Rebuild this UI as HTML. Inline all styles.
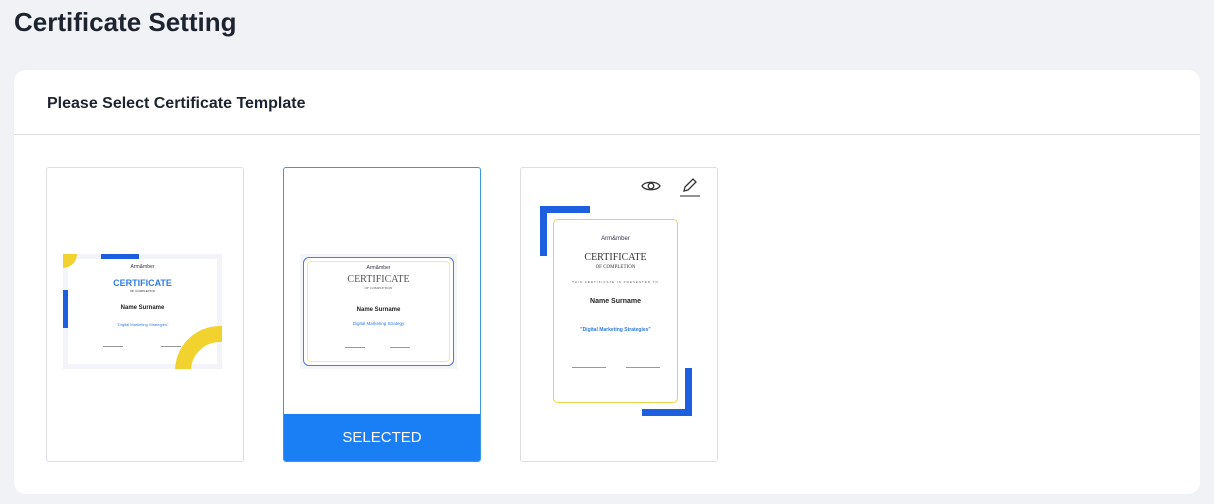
<!DOCTYPE html>
<html><head><style>
*{margin:0;padding:0;box-sizing:border-box}
body{width:1214px;height:504px;background:#f1f2f6;font-family:"Liberation Sans",sans-serif;position:relative;overflow:hidden}
h1{position:absolute;left:14px;top:7px;font-size:26px;font-weight:700;color:#1e2330}
.panel{position:absolute;left:14px;top:70px;width:1186px;height:424px;background:#fff;border-radius:12px}
.ph{position:absolute;left:33px;top:25px;font-size:16px;font-weight:700;color:#1e2330}
.line{position:absolute;left:0;top:64px;width:1186px;height:1px;background:#dcdee3}
.card{position:absolute;top:167px;width:198px;height:295px;border:1px solid #dcdee3;border-radius:3px;background:#fff;overflow:hidden}
.t{position:absolute;text-align:center;width:100%;left:0}
.sg{position:absolute;height:1px;background:#999;width:20px}
</style></head><body>
<h1>Certificate Setting</h1>
<div class="panel"><div class="ph">Please Select Certificate Template</div><div class="line"></div></div>

<div class="card" style="left:46px">
 <div style="position:absolute;left:16px;top:86px;width:159px;height:115px;background:#f3f4fa;overflow:hidden">
  <div style="position:absolute;left:5px;top:5px;width:149px;height:105px;background:#fff"></div>
  <div style="position:absolute;left:-14px;top:-14px;width:28px;height:28px;background:#f2d22e;border-radius:50%"></div>
  <div style="position:absolute;left:38px;top:0;width:38px;height:5px;background:#1e5fe0"></div>
  <div style="position:absolute;left:0;top:36px;width:5px;height:38px;background:#1e5fe0"></div>
  <div style="position:absolute;left:112px;top:72px;width:90px;height:90px;border:16px solid #f2d22e;border-radius:50%"></div>
  <div class="t" style="top:10px;font-size:5px;color:#334">Arm&amp;mber</div>
  <div class="t" style="top:24px;font-size:9px;font-weight:700;color:#2f7de0">CERTIFICATE</div>
  <div class="t" style="top:35px;font-size:3px;color:#333">OF COMPLETION</div>
  <div class="t" style="top:51px;font-size:6px;font-weight:700;color:#222">Name Surname</div>
  <div class="t" style="top:68px;font-size:4px;color:#2f7de0">"Digital Marketing Strategies"</div>
  <div class="sg" style="left:40px;top:92px"></div><div class="sg" style="left:98px;top:92px"></div>
 </div>
</div>

<div class="card" style="left:283px;border-color:#3a9ad9">
 <div style="position:absolute;left:16px;top:86px;width:157px;height:115px;background:#f4f5f9">
  <div style="position:absolute;left:3px;top:3px;width:151px;height:109px;border:1.5px solid #4a7ed8;border-radius:6px;background:#fff"></div>
  <div style="position:absolute;left:7px;top:7px;width:143px;height:101px;border:1px solid #f5e6a8;border-radius:4px"></div>
  <div class="t" style="top:11px;font-size:5px;color:#334">Arm&amp;mber</div>
  <div class="t" style="top:20px;font-size:10px;font-family:'Liberation Serif',serif;color:#555">CERTIFICATE</div>
  <div class="t" style="top:32px;font-size:3.5px;font-family:'Liberation Serif',serif;color:#555">OF COMPLETION</div>
  <div class="t" style="top:53px;font-size:6px;font-weight:700;color:#222">Name Surname</div>
  <div class="t" style="top:67px;font-size:4.5px;color:#2f7de0">Digital Marketing Strategy</div>
  <div class="sg" style="left:45px;top:93px"></div><div class="sg" style="left:90px;top:93px"></div>
 </div>
 <div style="position:absolute;left:0;bottom:0;width:100%;height:47px;background:#1a7ef5;color:#fff;font-size:15px;text-align:center;line-height:47px">SELECTED</div>
</div>

<div class="card" style="left:520px">
 <svg style="position:absolute;left:120px;top:10px" width="20" height="16" viewBox="0 0 20 16"><path d="M1 8C4 3 16 3 19 8C16 13 4 13 1 8Z" fill="none" stroke="#333" stroke-width="1.3"/><circle cx="10" cy="8" r="2.8" fill="none" stroke="#333" stroke-width="1.3"/></svg>
 <svg style="position:absolute;left:158px;top:8px" width="22" height="22" viewBox="0 0 22 22"><path d="M5 15L6 11L14 3L17 6L9 14Z" fill="none" stroke="#333" stroke-width="1.3"/><path d="M1 20H21" stroke="#555" stroke-width="1.3"/></svg>
 <div style="position:absolute;left:19px;top:38px;width:50px;height:50px;border-left:7px solid #1e5fe0;border-top:7px solid #1e5fe0"></div>
 <div style="position:absolute;left:121px;top:200px;width:50px;height:48px;border-right:7px solid #1e5fe0;border-bottom:7px solid #1e5fe0"></div>
 <div style="position:absolute;left:32px;top:51px;width:125px;height:184px;border:1.5px solid #efd24a;border-radius:5px;background:#fff">
  <div class="t" style="top:16px;font-size:6px;color:#334">Arm&amp;mber</div>
  <div class="t" style="top:32px;font-size:10px;font-family:'Liberation Serif',serif;color:#333">CERTIFICATE</div>
  <div class="t" style="top:45px;font-size:5px;font-family:'Liberation Serif',serif;color:#333">OF COMPLETION</div>
  <div class="t" style="top:60px;font-size:3px;color:#555;letter-spacing:1px">THIS CERTIFICATE IS PRESENTED TO</div>
  <div class="t" style="top:78px;font-size:7px;font-weight:700;color:#222">Name Surname</div>
  <div class="t" style="top:107px;font-size:5px;font-weight:700;color:#2f7de0">"Digital Marketing Strategies"</div>
  <div class="sg" style="left:18px;top:147px;width:34px"></div><div class="sg" style="left:72px;top:147px;width:34px"></div>
 </div>
</div>
</body></html>
